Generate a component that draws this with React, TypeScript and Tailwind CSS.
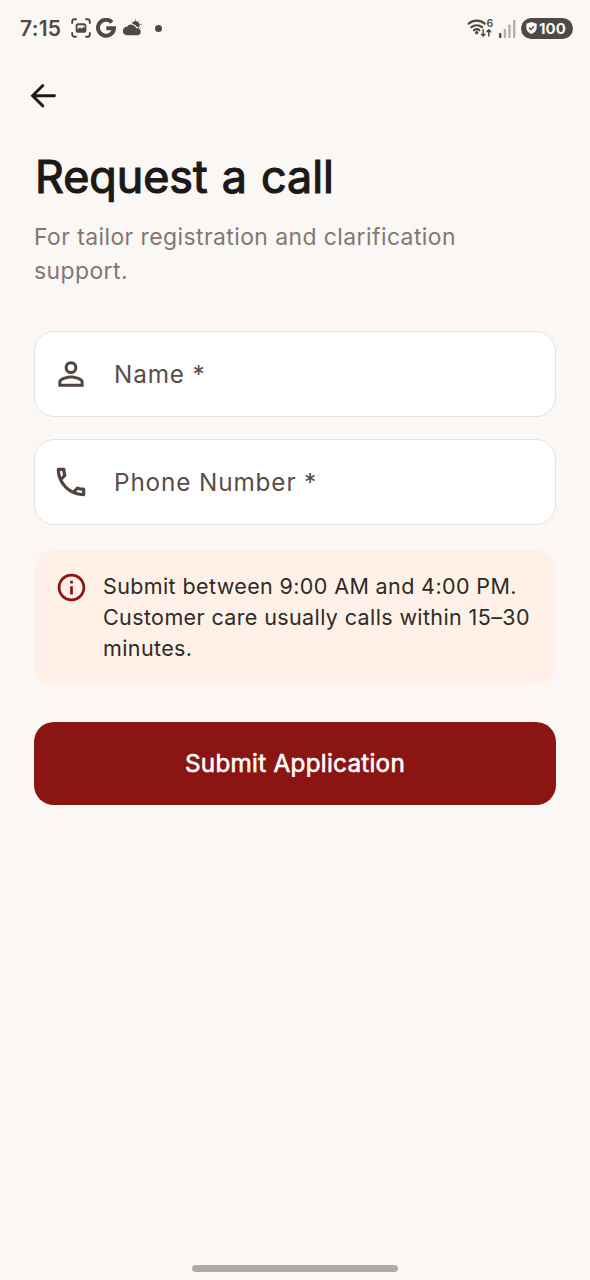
import React from "react";
import type { ReactNode } from "react";

function ScreenshotIcon() {
  return (
    <svg width="20" height="20" viewBox="0 0 20 20" fill="none" stroke="#4d4945" strokeWidth="1.9" strokeLinecap="round">
      <path d="M1.2 5V3.6A2.4 2.4 0 0 1 3.6 1.2H5M15 1.2h1.4A2.4 2.4 0 0 1 18.8 3.6V5M18.8 15v1.4a2.4 2.4 0 0 1-2.4 2.4H15M5 18.8H3.6a2.4 2.4 0 0 1-2.4-2.4V15" />
      <rect x="5.6" y="6.2" width="8.8" height="7.6" rx="1.6" />
      <path d="M6.5 13v-1.5L9 10l1.7 1 1.800-1.500 1.500 1.500V13z" fill="#4d4945" strokeWidth="1" />
    </svg>
  );
}

function GoogleIcon() {
  return (
    <svg width="20" height="20" viewBox="0 0 20 20" fill="none" stroke="#4d4945" strokeWidth="4">
      <path d="M15.9 4.3A8 8 0 1 0 18 10.2H10.3" />
    </svg>
  );
}

function WeatherIcon() {
  return (
    <svg width="19" height="17" viewBox="0 0 19 17" fill="#4d4945">
      <path d="M4.300 16.300a4.300 4.300 0 0 1-.3-8.600 5.200 5.200 0 0 1 9.200 1.600 3.500 3.500 0 0 1 1.800 7z" />
      <path d="M9 4.700a4 4 0 1 1 6.800 4l-1.800-.9A6.400 6.400 0 0 0 9 4.700z" />
      <path d="M12.500.3v1.300M8.600 1.700l.8.900M16.600 1.600l-.8.900M17.400 5.400h1.400M17 8.800l.9.700" stroke="#4d4945" strokeWidth=".8" />
    </svg>
  );
}

function WifiIcon() {
  return (
    <svg width="28" height="22" viewBox="0 0 28 22" fill="none" stroke="#4d4945" strokeWidth="2.2" strokeLinecap="round">
      <path d="M1.700 6.700a12.200 12.200 0 0 1 16 0M4.400 10.200a8.300 8.300 0 0 1 10.600 0M7 13.200a4.600 4.600 0 0 1 5.400 0" />
      <circle cx="9.700" cy="15.800" r="1.700" fill="#4d4945" stroke="none" />
      <path d="M16.200 12.700v6M14.400 17.200l1.800 1.800 1.800-1.800M21.800 19v-6M20 14.600l1.800-1.800 1.800 1.800" strokeWidth="1.5" />
      <text x="19.5" y="9.500" fontFamily="Inter, sans-serif" fontSize="10.5" fontWeight="600" fill="#4d4945" stroke="none">6</text>
    </svg>
  );
}

function SignalIcon() {
  return (
    <svg width="17" height="18" viewBox="0 0 17 18" fill="#b3afab">
      <rect x="0" y="13" width="2.4" height="5" rx=".8" fill="#4d4945" />
      <rect x="4.7" y="9" width="2.4" height="9" rx=".8" />
      <rect x="9.3" y="4.5" width="2.4" height="13.5" rx=".8" />
      <rect x="14" y="0" width="2.4" height="18" rx=".8" />
    </svg>
  );
}

function StatusBar() {
  return (
    <div className="flex h-14 items-center justify-between pl-5 pr-[17px] text-[#4d4945]">
      <div className="flex items-center">
        <span className="w-[51px] text-[21px] leading-none font-semibold tracking-[0.3px]">7:15</span>
        <ScreenshotIcon />
        <span className="ml-[5px]">
          <GoogleIcon />
        </span>
        <span className="ml-[7px] -mt-px">
          <WeatherIcon />
        </span>
        <span className="ml-[13px] size-[7px] rounded-full bg-[#4d4945]" />
      </div>
      <div className="flex items-center">
        <WifiIcon />
        <span className="ml-[4px] mt-px">
          <SignalIcon />
        </span>
        <div className="ml-[5px] flex h-[21px] w-[52px] items-center rounded-full bg-[#4d4945] pl-[5px] text-[#fbf7f4]">
          <svg width="11" height="12" viewBox="0 0 11 12">
            <path d="M5.5 0l5.2 1.7v4.1c0 3-2.2 5.200-5.200 6.200C2.500 11 .3 8.800.3 5.800V1.700z" fill="#fbf7f4" />
            <path d="M3 5.700l1.900 1.800 3.200-3.300" fill="none" stroke="#4d4945" strokeWidth="1.3" />
          </svg>
          <span className="mt-px ml-[2px] text-[15px] leading-none font-bold tracking-[0.1px]">100</span>
        </div>
      </div>
    </div>
  );
}

function Field({ icon, label }: { icon: ReactNode; label: string }) {
  return (
    <div className="flex h-[86px] items-center rounded-[20px] border-[1.5px] border-[#e8e1dd] bg-white pl-[17px]">
      {icon}
      <span className="ml-[24px] text-[24.3px] leading-none tracking-[0.87px] text-[#5a4c48]">{label}</span>
    </div>
  );
}

function App() {
  return (
    <div className="flex h-[1280px] w-[590px] flex-col bg-[#fbf7f4] font-[Inter,sans-serif]">
      <StatusBar />
      <div className="flex h-20 items-center pl-[30px]">
        <svg width="26" height="26" viewBox="0 0 26 26" fill="none" stroke="#1b1a18" strokeWidth="2.9" strokeLinecap="round">
          <path d="M24.5 12.7H3M12.8 2.5L2.6 12.7l10.2 10.2" />
        </svg>
      </div>

      <main className="flex flex-col px-[34px] pt-[12px]">
        <h1 className="pl-px text-[44.8px] leading-[58px] [word-spacing:1.5px] text-[#1b1a18] [-webkit-text-stroke:1.2px_#1b1a18]">
          Request a call
        </h1>
        <p className="mt-[14px] text-[22.9px] leading-[34px] tracking-[0.44px] text-[#7f7873]">
          For tailor registration and clarification
          <br />
          support.
        </p>

        <div className="mt-[43px] flex flex-col gap-[22px]">
          <Field
            label="Name *"
            icon={
              <svg width="38" height="38" viewBox="0 0 24 24" fill="#51433f">
                <path d="M12 5.900a2.100 2.100 0 1 1 0 4.200 2.100 2.100 0 0 1 0-4.200m0 9c2.970 0 6.100 1.460 6.100 2.100v1.100H5.900V17c0-.64 3.130-2.100 6.100-2.100M12 4C9.790 4 8 5.790 8 8s1.790 4 4 4 4-1.790 4-4-1.790-4-4-4m0 9c-2.670 0-8 1.340-8 4v3h16v-3c0-2.660-5.330-4-8-4" />
              </svg>
            }
          />
          <Field
            label="Phone Number *"
            icon={
              <svg width="38" height="38" viewBox="0 0 24 24" fill="#51433f">
                <path d="M6.540 5c.06.89.21 1.760.45 2.590l-1.200 1.200c-.41-1.200-.67-2.470-.76-3.790zm9.860 12.020c.85.24 1.720.39 2.600.45v1.490c-1.320-.09-2.590-.35-3.800-.75zM7.500 3H4c-.55 0-1 .45-1 1 0 9.390 7.610 17 17 17 .55 0 1-.45 1-1v-3.490c0-.55-.45-1-1-1-1.240 0-2.450-.2-3.570-.57a.8.8 0 0 0-.31-.05c-.26 0-.51.100-.71.290l-2.200 2.200a15.150 15.150 0 0 1-6.590-6.590l2.200-2.200c.28-.28.36-.67.25-1.020A11.400 11.400 0 0 1 8.500 4c0-.55-.45-1-1-1" />
              </svg>
            }
          />
        </div>

        <div className="mt-[25px] flex h-[135px] rounded-[20px] bg-[#fff1e8] pt-[21px] pl-[21px]">
          <svg className="shrink-0" width="33" height="33" viewBox="0 0 24 24" fill="#8b1512">
            <path d="M11 7h2v2h-2zm0 4h2v6h-2zm1-9C6.480 2 2 6.480 2 12s4.480 10 10 10 10-4.480 10-10S17.520 2 12 2m0 18c-4.410 0-8-3.590-8-8s3.590-8 8-8 8 3.590 8 8-3.590 8-8 8" />
          </svg>
          <p className="ml-[15px] text-[21.5px] leading-[31px] tracking-[0.38px] whitespace-nowrap text-[#2f2926]">
            Submit between 9:00 AM and 4:00 PM.
            <br />
            Customer care usually calls within 15–30
            <br />
            minutes.
          </p>
        </div>

        <button className="mt-[37px] h-[83px] rounded-[20px] bg-[#8b1512] text-[24.3px] tracking-[0.25px] text-white [-webkit-text-stroke:0.6px_white]">
          Submit Application
        </button>
      </main>

      <div className="mt-auto mb-[8px] h-[7px] w-[206px] self-center rounded-full bg-[#aeaaa7]" />
    </div>
  );
}

export default App;
